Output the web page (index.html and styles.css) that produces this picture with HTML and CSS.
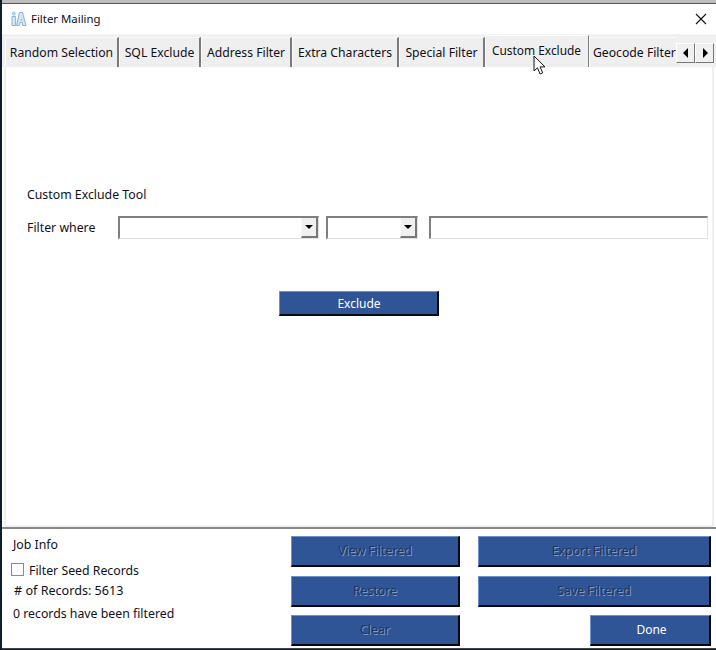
FILE: index.html
```html
<!DOCTYPE html>
<html lang="en">
<head>
<meta charset="utf-8">
<title>Filter Mailing</title>
<link rel="stylesheet" href="styles.css">
</head>
<body>
<div class="backdrop-top"></div>
<div class="window">
  <header class="titlebar">
    <svg class="app-icon" width="16" height="16" viewBox="0 0 16 16" fill="none">
      <circle cx="2.800" cy="2.600" r="1.600" fill="#bcd7ef" stroke="#7fb0dc" stroke-width=".6"/>
      <path d="M1 5.500h3.600v9H1z" fill="#d6e6f5" stroke="#86b5df"/>
      <path d="M8.500 1.500h3l3.500 13h-3.200l-.6-3H9l-.7 3H5.500z" fill="#d6e6f5" stroke="#86b5df"/>
      <path d="M9.500 8.800h2" stroke="#86b5df"/>
    </svg>
    <span class="title">Filter Mailing</span>
    <svg class="close" width="12" height="12" viewBox="0 0 12 12"><path d="M1 1l10 10M11 1 1 11" stroke="#111" stroke-width="1.100" fill="none"/></svg>
  </header>

  <nav class="tabs">
    <div class="tab w-random">Random Selection</div>
    <div class="tab w-sql">SQL Exclude</div>
    <div class="tab w-address">Address Filter</div>
    <div class="tab w-extra">Extra Characters</div>
    <div class="tab w-special">Special Filter</div>
    <div class="tab active w-custom">Custom Exclude</div>
    <div class="tab last w-geo">Geocode Filter</div>
    <div class="scroller">
      <div class="scroll-btn"><span class="arrow-left"></span></div>
      <div class="scroll-btn"><span class="arrow-right"></span></div>
    </div>
  </nav>

  <main class="content">
    <div class="tool-title">Custom Exclude Tool</div>
    <div class="filter-row">
      <label class="filter-label">Filter where</label>
      <div class="combo combo-a"><span class="combo-btn"><span class="arrow-down"></span></span></div>
      <div class="combo combo-b"><span class="combo-btn"><span class="arrow-down"></span></span></div>
      <div class="text-input"></div>
    </div>
    <div class="exclude-wrap"><button class="btn exclude">Exclude</button></div>
  </main>

  <footer class="footer">
    <div class="info">
      <div class="job">Job Info</div>
      <div class="seed"><span class="check"></span><span>Filter Seed Records</span></div>
      <div class="records"># of Records: 5613</div>
      <div class="filtered">0 records have been filtered</div>
    </div>
    <div class="actions">
      <button class="btn off">View Filtered</button>
      <button class="btn off">Export Filtered</button>
      <button class="btn off row2">Restore</button>
      <button class="btn off row2">Save Filtered</button>
      <button class="btn off">Clear</button>
      <button class="btn done">Done</button>
    </div>
  </footer>
</div>
<svg class="cursor" width="14" height="21" viewBox="0 0 14 21"><path d="M1 1v15l3.500-3.200 2.600 6.200 2.600-1.100-2.600-6H12z" fill="#fff" stroke="#111" stroke-width="1"/></svg>
</body>
</html>
```

FILE: styles.css
```css
* { box-sizing: border-box; }
html, body { margin: 0; height: 100%; }
body {
  position: relative;
  width: 716px;
  height: 650px;
  overflow: hidden;
  background: #0e1c30;
  padding: 0 0 1px 2px;
  font-family: "Noto Sans", "DejaVu Sans", sans-serif;
  font-size: 12.3px;
  color: #10101a;
}
.backdrop-top { height: 3px; background: #bdbdbd; }
.window {
  width: 714px;
  height: 646px;
  background: #fff;
  border-top: 1px solid #555;
  display: flex;
  flex-direction: column;
}
.titlebar {
  height: 30px;
  display: flex;
  align-items: center;
  padding: 0 9px;
  background: #fff;
}
.app-icon { flex: none; }
.title { margin-left: 4px; margin-bottom: 1px; font-size: 11.4px; }
.close { margin-left: auto; }
.tabs {
  height: 33px;
  display: flex;
  align-items: flex-start;
  padding: 2px 0 0 3px;
  background: #f0f0f0;
  border-top: 1px solid #f4f4f4;
}
.tab {
  height: 30px;
  padding-top: 6px;
  text-align: center;
  white-space: nowrap;
  background: #efefef;
  border-top: 1px solid #fbfbfb;
  border-left: 1px solid #fbfbfb;
  border-right: 2px solid #7a7a7a;
  font-size: 12.2px;
}
.tab.active {
  height: 32px;
  margin-top: -2px;
  padding: 6px 1px 0 0;
  border-right: 1px solid #7a7a7a;
  font-size: 11.9px;
}
.tab.last { border-right: none; overflow: hidden; padding-left: 3px; text-align: left; }
.w-random { width: 114px; }
.w-sql { width: 82px; }
.w-address { width: 91px; }
.w-extra { width: 107px; }
.w-special { width: 86px; }
.w-custom { width: 104px; }
.w-geo { width: 87px; }
.scroller { display: flex; margin-top: 6px; }
.scroll-btn {
  width: 19px;
  height: 20px;
  background: #f0f0f0;
  border-top: 1px solid #fff;
  border-left: 1px solid #fff;
  border-right: 1px solid #777;
  border-bottom: 1px solid #777;
  display: flex;
  align-items: center;
  justify-content: center;
}
.arrow-left { margin-left: -1px; border-style: solid; border-color: transparent #000 transparent transparent; border-width: 5px 5px 5px 0; }
.arrow-right { margin-left: 1px; border-style: solid; border-color: transparent transparent transparent #000; border-width: 5px 0 5px 5px; }
.arrow-down { border-style: solid; border-color: #000 transparent transparent; border-width: 4px 4px 0; }
.content {
  width: 710px;
  height: 460px;
  margin-left: 2px;
  background: #fff;
  border-left: 2px solid #f0f0f0;
  border-right: 2px solid #f0f0f0;
  border-bottom: 2px solid #f0f0f0;
  padding: 119px 0 0 21px;
}
.tool-title { height: 17px; line-height: 17px; }
.filter-row {
  display: flex;
  align-items: center;
  margin-top: 13px;
}
.filter-label { width: 91px; height: 23px; line-height: 23px; flex: none; }
.combo {
  height: 23px;
  background: #fff;
  border-top: 2px solid #7f7f7f;
  border-left: 2px solid #7f7f7f;
  border-right: 1px solid #e3e3e3;
  border-bottom: 1px solid #e3e3e3;
  display: flex;
  justify-content: flex-end;
  flex: none;
}
.combo-a { width: 201px; }
.combo-b { width: 92px; margin-left: 7px; }
.combo-btn {
  width: 17px;
  height: 20px;
  background: #f0f0f0;
  border-right: 2px solid #777;
  border-bottom: 2px solid #777;
  border-left: 1px solid #f8f8f8;
  display: flex;
  align-items: center;
  justify-content: center;
}
.text-input {
  width: 279px;
  height: 23px;
  margin-left: 11px;
  background: #fff;
  border-top: 2px solid #7f7f7f;
  border-left: 2px solid #7f7f7f;
  border-right: 1px solid #e3e3e3;
  border-bottom: 1px solid #e3e3e3;
  flex: none;
}
.exclude-wrap { margin-top: 52px; padding-left: 252px; }
.btn {
  display: block;
  padding: 0 0 1px;
  background: #2f5597;
  color: #fff;
  font-family: inherit;
  font-size: 12px;
  border-top: 1px solid #6d8fca;
  border-left: 1px solid #6d8fca;
  border-right: 2px solid #05080f;
  border-bottom: 2px solid #05080f;
}
.btn.off { color: #22345a; text-shadow: 1px 1px 0 #7d9acb; font-size: 12.3px; padding-bottom: 2px; }
.row2 { margin-top: 1px; }
.exclude { width: 160px; height: 25px; padding: 0 0 0 1px; }
.footer {
  flex: 1;
  background: #fff;
  border-top: 2px solid #888;
  border-bottom: 1px solid #444;
  display: flex;
  padding: 0 3px 0 0;
}
.info { width: 289px; padding: 8px 0 0 11px; flex: none; }
.job { height: 16px; line-height: 16px; }
.seed { display: flex; align-items: center; margin-top: 9px; height: 16px; margin-left: -2px; }
.check {
  width: 13px;
  height: 13px;
  border: 1px solid #8a8a8a;
  background: #fff;
  margin-right: 5px;
  margin-top: -2px;
  flex: none;
}
.records { margin-top: 5px; height: 16px; line-height: 16px; padding-left: 1px; font-size: 12.6px; }
.filtered { margin-top: 7px; height: 16px; line-height: 16px; }
.actions {
  width: 420px;
  display: grid;
  grid-template-columns: 169px 233px;
  grid-template-rows: 31px 32px 31px;
  column-gap: 18px;
  row-gap: 8px;
  padding-top: 7px;
}
.done { width: 121px; justify-self: end; padding: 0 0 2px 3px; }
.cursor { position: absolute; left: 533px; top: 55px; }
```
